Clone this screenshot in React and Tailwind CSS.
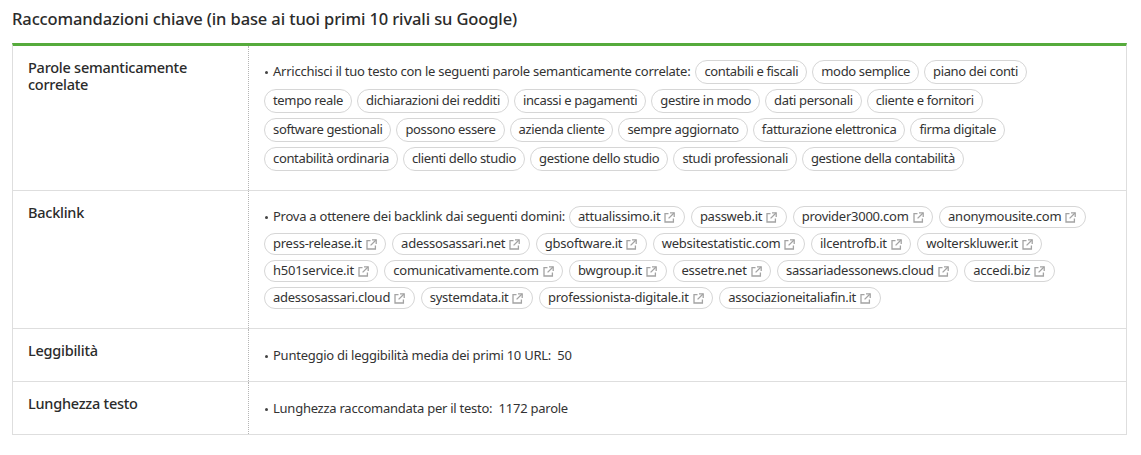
import React from 'react';

const keywords = [
  ['tempo reale', 'dichiarazioni dei redditi', 'incassi e pagamenti', 'gestire in modo', 'dati personali', 'cliente e fornitori'],
  ['software gestionali', 'possono essere', 'azienda cliente', 'sempre aggiornato', 'fatturazione elettronica', 'firma digitale'],
  ['contabilità ordinaria', 'clienti dello studio', 'gestione dello studio', 'studi professionali', 'gestione della contabilità'],
];

const domains = [
  ['press-release.it', 'adessosassari.net', 'gbsoftware.it', 'websitestatistic.com', 'ilcentrofb.it', 'wolterskluwer.it'],
  ['h501service.it', 'comunicativamente.com', 'bwgroup.it', 'essetre.net', 'sassariadessonews.cloud', 'accedi.biz'],
  ['adessosassari.cloud', 'systemdata.it', 'professionista-digitale.it', 'associazioneitaliafin.it'],
];

const LinkIcon = () => (
  <svg width="11" height="11" viewBox="0 0 11 11" fill="none" stroke="#a3a3a3" strokeWidth="1.3" className="ml-1 shrink-0">
    <path d="M4.5 1.6H1v8.4h8.4V6.5" />
    <path d="M6 .8h4.2V5" />
    <path d="M10 1 4.6 6.4" />
  </svg>
);

const Chip = ({ label, link }) => (
  <span
    className={`inline-flex items-center rounded-full border border-[#d6d6d6] whitespace-nowrap ${
      link ? 'h-[22px] pr-[8.5px] pl-2' : 'h-6 px-2 tracking-[-0.35px]'
    }`}
  >
    {label}
    {link && <LinkIcon />}
  </span>
);

const Bullet = () => <span className="mr-[5px] ml-px h-[3px] w-[3px] shrink-0 rounded-full bg-[#444]" />;

const Row = ({ title, children, last, contentClass }) => (
  <div className={`flex ${last ? '' : 'border-b border-[#dedede]'}`}>
    <div className="w-[236px] shrink-0 border-r border-dotted border-[#b5b5b5] pt-[13px] pr-4 pl-[15px] text-[14.5px] leading-[17px] font-medium text-[#2b2b2b]">
      {title}
    </div>
    <div className={`flex-1 pl-[15px] ${contentClass}`}>{children}</div>
  </div>
);

const ChipRows = ({ intro, first, rows, link }) => (
  <div className={`flex flex-col gap-[5px] ${link ? '[&>div]:gap-1.5' : '[&>div]:gap-[5px]'}`}>
    <div className="flex items-center">
      <span className={`flex items-center whitespace-nowrap ${link ? '-mr-0.5' : ''}`}>
        <Bullet />
        {intro}
      </span>
      {first.map((c) => (
        <Chip key={c} label={c} link={link} />
      ))}
    </div>
    {rows.map((row, i) => (
      <div key={i} className="flex items-center">
        {row.map((c) => (
          <Chip key={c} label={c} link={link} />
        ))}
      </div>
    ))}
  </div>
);

const Line = ({ text }) => (
  <div className="flex h-6 items-center whitespace-pre">
    <Bullet />
    {text}
  </div>
);

const App = () => {
  return (
    <div className="h-[455px] w-[1141px] overflow-hidden bg-white px-3 text-[13px] tracking-[-0.25px] text-[#333]" style={{ fontFamily: '"Noto Sans", sans-serif' }}>
      <h2 className="pt-[7px] pb-[13px] text-[16.5px] leading-[23px] font-medium tracking-[-0.12px] text-[#2b2b2b]">
        Raccomandazioni chiave (in base ai tuoi primi 10 rivali su Google)
      </h2>
      <div className="w-[1115px] border-x border-t-[3px] border-b border-[#dedede] border-t-[#56ab3c]">
        <Row title="Parole semanticamente correlate" contentClass="pt-3.5 pb-[19px]">
          <ChipRows
            intro="Arricchisci il tuo testo con le seguenti parole semanticamente correlate:"
            first={['contabili e fiscali', 'modo semplice', 'piano dei conti']}
            rows={keywords}
          />
        </Row>
        <Row title="Backlink" contentClass="pt-[15px] pb-[19px]">
          <ChipRows
            link
            intro="Prova a ottenere dei backlink dai seguenti domini:"
            first={['attualissimo.it', 'passweb.it', 'provider3000.com', 'anonymousite.com']}
            rows={domains}
          />
        </Row>
        <Row title="Leggibilità" contentClass="pt-[15px] pb-[13px]">
          <Line text="Punteggio di leggibilità media dei primi 10 URL:  50" />
        </Row>
        <Row title="Lunghezza testo" last contentClass="pt-[15px] pb-[13px]">
          <Line text="Lunghezza raccomandata per il testo:  1172 parole" />
        </Row>
      </div>
    </div>
  );
};

export default App;
